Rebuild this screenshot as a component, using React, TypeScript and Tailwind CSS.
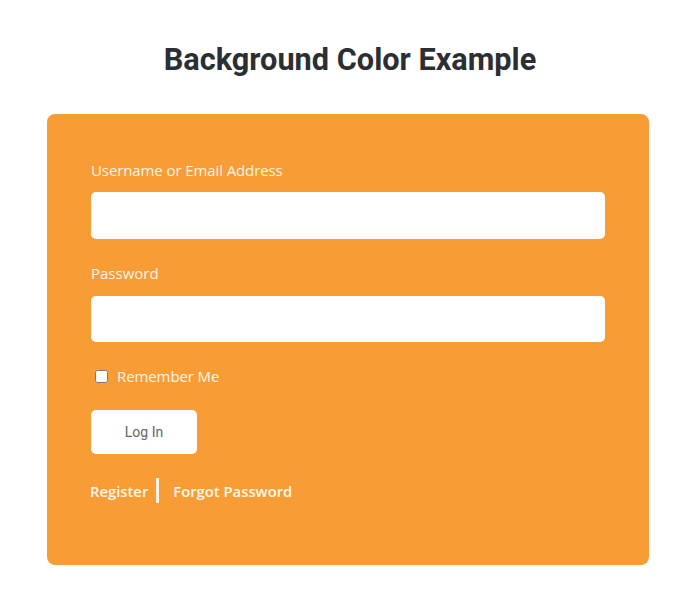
export default function App() {
  return (
    <div className="min-h-screen bg-white px-[47px] pb-[50px]" style={{ width: 700 }}>
      <h1 className="pt-[42px] text-center text-[30.7px] leading-[36px] font-bold text-[#2b2f33] font-['Roboto',sans-serif]">
        Background Color Example
      </h1>

      <div className="mt-[36px] w-[602px] rounded-[8px] bg-[#f89d35] pl-[44px] pr-[44px] pt-[45px] pb-[62px] font-['Open_Sans',sans-serif] text-[15px] leading-[22px] text-[#fdf4e8]">
        <label className="block tracking-[-0.1px]">Username or Email Address</label>
        <input type="text" className="mt-[11px] block h-[47px] w-[514px] rounded-[5px] bg-white outline-none" />

        <label className="mt-[23px] block">Password</label>
        <input type="password" className="mt-[12px] block h-[46px] w-[514px] rounded-[5px] bg-white outline-none" />

        <div className="mt-[23px] flex items-center">
          <input type="checkbox" className="ml-[4px] h-[13px] w-[13px]" />
          <span className="ml-[9px] tracking-[-0.1px]">Remember Me</span>
        </div>

        <button className="mt-[23px] h-[44px] w-[106px] rounded-[5px] bg-white text-[14px] font-normal text-[#666666] font-['Roboto',sans-serif]">
          Log In
        </button>

        <div className="mt-[24px] flex items-center text-[14.8px] font-semibold text-[#fff8ee]">
          <span className="-ml-[1px]">Register</span>
          <span className="mx-[8px] h-[25px] w-[3px] bg-[#fdf4e8]" />
          <span className="ml-[6px]">Forgot Password</span>
        </div>
      </div>
    </div>
  );
}
